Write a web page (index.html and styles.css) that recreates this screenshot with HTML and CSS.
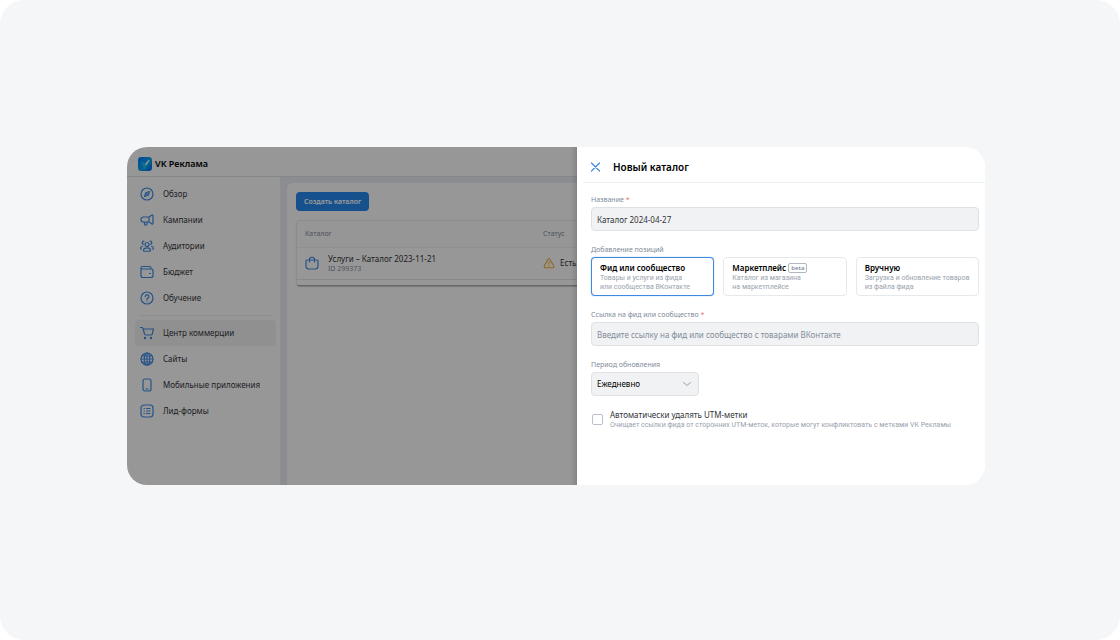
FILE: index.html
```html
<!DOCTYPE html>
<html lang="ru">
<head>
<meta charset="utf-8">
<meta name="viewport" content="width=device-width, initial-scale=1">
<title>VK Реклама – Новый каталог</title>
<link rel="stylesheet" href="styles.css">
</head>
<body>
<main class="stage">
  <div class="window">
    <div class="app">
      <header class="topbar">
        <svg class="logo" viewBox="0 0 26 26" aria-hidden="true">
          <defs>
            <linearGradient id="logo-fill" x1="0" y1="0" x2="1" y2="1">
              <stop offset="0" stop-color="#0077ff"/>
              <stop offset=".55" stop-color="#08a5f0"/>
              <stop offset="1" stop-color="#0062e8"/>
            </linearGradient>
          </defs>
          <rect width="26" height="26" rx="6" fill="url(#logo-fill)"/>
          <path d="M5 9c3 0 6 2 8 4l4-4 3 3-4 5c-1 3-3 5-5 6-1-5-3-9-6-14z" fill="#1fbdea"/>
          <path d="M13 14l5-7 4-2-2 4-5 6z" fill="#fff"/>
        </svg>
        <span class="brand">VK Реклама</span>
      </header>
      <div class="workspace">
        <nav class="sidebar">
          <a class="nav-item" href="#"><svg class="icon" viewBox="0 0 28 28"><circle cx="14" cy="14" r="12"/><path d="M19 9l-2.500 7.500L9 19l2.500-7.500z"/><circle cx="14" cy="14" r=".6"/></svg>Обзор</a>
          <a class="nav-item" href="#"><svg class="icon" viewBox="0 0 28 28"><path d="M18 8H7a4.500 4.500 0 0 0 0 10h11zM18 8l6-4c1-.5 2 0 2 1v16c0 1-1 1.500-2 1l-6-4M9 18v4c0 3 5 3 5 0v-4"/></svg>Кампании</a>
          <a class="nav-item" href="#"><svg class="icon" viewBox="0 0 28 28"><circle cx="14" cy="11" r="4"/><path d="M7 23c0-7 14-7 14 0 0 1-.5 1.500-1.500 1.500h-11C7.500 24.500 7 24 7 23zM8 4.500a3 3 0 1 0-1 6M5 14.500c-2.500.5-4 2-4 4.500 0 1 .5 1.500 2 1.500M20 4.500a3 3 0 1 1 1 6M23 14.500c2.500.5 4 2 4 4.500 0 1-.5 1.500-2 1.500"/></svg>Аудитории</a>
          <a class="nav-item" href="#"><svg class="icon" viewBox="0 0 28 28"><path d="M22 8V6c0-2-1-3-3-3H5C3 3 2 4 2 6v15c0 2 1 4 4 4h16c3 0 4-1 4-4v-9c0-3-1-4-4-4H5C3 8 2 7 2 5.500"/><path d="M19 17h2"/></svg>Бюджет</a>
          <a class="nav-item" href="#"><svg class="icon" viewBox="0 0 28 28"><circle cx="14" cy="14" r="12"/><path d="M10.500 11.500c0-5 7.500-4.500 7.500-.5 0 3-4 3-4 6M14 20v.5"/></svg>Обучение</a>
          <hr class="nav-divider">
          <a class="nav-item nav-item-active" href="#" aria-current="page"><svg class="icon" viewBox="0 0 28 28"><path d="M1 3h3c1 0 1.500 1 2 2l3 11c.3 1.500 1 2 2.500 2H22c1.500 0 2-.5 2.500-2L27 6H6.500"/><circle cx="10" cy="24" r="1.300"/><circle cx="22" cy="24" r="1.300"/></svg>Центр коммерции</a>
          <a class="nav-item" href="#"><svg class="icon" viewBox="0 0 28 28"><circle cx="14" cy="14" r="12"/><ellipse cx="14" cy="14" rx="5.500" ry="12"/><path d="M2 14h24M4 8h20M4 20h20M14 2v24"/></svg>Сайты</a>
          <a class="nav-item" href="#"><svg class="icon" viewBox="0 0 28 28"><rect x="6" y="2" width="16" height="24" rx="4"/><path d="M12 22h4"/></svg>Мобильные приложения</a>
          <a class="nav-item" href="#"><svg class="icon" viewBox="0 0 28 28"><rect x="2" y="2" width="24" height="24" rx="6"/><path d="M8 9h1M13 9h7M8 14h1M13 14h7M8 19h1M13 19h7"/></svg>Лид-формы</a>
        </nav>
        <section class="content">
          <button class="create" type="button">Создать каталог</button>
          <div class="table-box">
            <table class="catalogs">
              <thead><tr><th class="col-name">Каталог</th><th class="col-status">Статус</th></tr></thead>
              <tbody><tr>
                <td><div class="catalog">
                  <svg class="icon" viewBox="0 0 28 28"><path d="M4 8h20c1.500 0 2 1 2 2v10c0 4-2 6-6 6H8c-4 0-6-2-6-6V10c0-1 .5-2 2-2z"/><path d="M9 12V7c0-6 10-6 10 0v5"/></svg>
                  <div><div class="catalog-name">Услуги – Каталог 2023-11-21</div><div class="catalog-id">ID 299373</div></div>
                </div></td>
                <td><div class="status">
                  <svg class="icon icon-warning" viewBox="0 0 28 28"><path d="M12 5c1-2 3-2 4 0l9 16c1 2 0 4-2 4H5c-2 0-3-2-2-4zM14 11v6M14 20.500v.5"/></svg>
                  <span>Есть</span>
                </div></td>
              </tr></tbody>
            </table>
          </div>
        </section>
      </div>
      <div class="scrim"></div>
    </div>
    <aside class="panel">
      <header class="panel-head">
        <button class="close" type="button" aria-label="Закрыть"><svg viewBox="0 0 20 20"><path d="M2 2l16 16M18 2L2 18"/></svg></button>
        <h1 class="panel-title">Новый каталог</h1>
      </header>
      <form class="form">
        <div class="group">
          <label class="label" for="name">Название <span class="required">*</span></label>
          <input class="field" id="name" type="text" value="Каталог 2024-04-27">
        </div>
        <div class="group">
          <span class="label" id="source-label">Добавление позиций</span>
          <div class="options" role="group" aria-labelledby="source-label">
            <button class="option option-selected" type="button" aria-pressed="true"><span class="option-title">Фид или сообщество</span><span class="option-text">Товары и услуги из фида<br>или сообщества ВКонтакте</span></button>
            <button class="option" type="button" aria-pressed="false"><span class="option-title">Маркетплейс <span class="beta">beta</span></span><span class="option-text">Каталог из магазина<br>на маркетплейсе</span></button>
            <button class="option" type="button" aria-pressed="false"><span class="option-title">Вручную</span><span class="option-text">Загрузка и обновление товаров<br>из файла фида</span></button>
          </div>
        </div>
        <div class="group">
          <label class="label" for="link">Ссылка на фид или сообщество <span class="required">*</span></label>
          <input class="field" id="link" type="text" placeholder="Введите ссылку на фид или сообщество с товарами ВКонтакте">
        </div>
        <div class="group">
          <label class="label" for="period">Период обновления</label>
          <div class="select-wrap">
            <select class="field select" id="period"><option>Ежедневно</option></select>
            <svg class="chevron" viewBox="0 0 16 10"><path d="M1 2l7 6 7-6"/></svg>
          </div>
        </div>
        <div class="check-row">
          <input class="check" id="utm" type="checkbox">
          <label for="utm"><span class="check-title">Автоматически удалять UTM-метки</span><span class="check-text">Очищает ссылки фида от сторонних UTM-меток, которые могут конфликтовать с метками VK Рекламы</span></label>
        </div>
      </form>
    </aside>
  </div>
</main>
</body>
</html>
```
FILE: styles.css
```css
* { box-sizing: border-box; }
body {
  margin: 0;
  background: #fff;
  color: #323438;
  font: 8px/12px "Noto Sans", "Open Sans", sans-serif;
}
button, input, select { font: inherit; color: inherit; margin: 0; }
svg { display: block; flex: none; fill: none; stroke-linecap: round; stroke-linejoin: round; }
.stage {
  display: flex;
  min-height: 100vh;
  padding: 147px 135px 155px 127px;
  background: #f5f6f8;
  border-radius: 24px;
}
.window {
  flex: 1;
  display: grid;
  grid-template-columns: minmax(0, 450fr) minmax(0, 408fr);
  border-radius: 20px;
  overflow: hidden;
  background: #fff;
}

.app { position: relative; display: flex; flex-direction: column; overflow: hidden; background: #fcfcfc; }
.scrim {
  position: absolute;
  inset: 0;
  background: linear-gradient(to left, rgba(0, 0, 0, .12), transparent 6px), rgba(0, 0, 0, .4);
}
.topbar {
  display: flex;
  align-items: center;
  gap: 3px;
  height: 30px;
  padding: 4px 0 0 11px;
  border-bottom: 1px solid #dce1e6;
}
.logo { width: 14px; height: 14px; stroke: none; }
.brand { font-size: 9px; font-weight: 600; color: #000; }
.workspace { flex: 1; display: flex; background: #e9ecf1; }
.sidebar { flex: 0 0 153px; padding: 4px 4px 8px 8px; background: #fcfcfc; }
.nav-item {
  display: flex;
  align-items: center;
  gap: 9px;
  height: 26px;
  padding-left: 5px;
  border-radius: 4px;
  text-decoration: none;
  color: inherit;
  white-space: nowrap;
}
.nav-item-active { background: #f0f1f2; }
.nav-divider { height: 1px; margin: 4px; border: 0; background: #eeeff1; }
.icon { width: 14px; height: 14px; stroke: #3f8ae0; stroke-width: 2.4; }
.icon-warning { width: 12px; height: 12px; stroke: #f5a623; }

.content {
  flex: 1;
  min-width: 0;
  margin: 6px 0 0 7px;
  padding: 9px 0 0 9px;
  overflow: hidden;
  border-top-left-radius: 6px;
  background: #fcfcfc;
}
.create {
  display: block;
  height: 19px;
  padding: 0 8px;
  border: 0;
  border-radius: 4px;
  background: #2688eb;
  color: #fff;
  font-size: 7px;
  font-weight: 600;
}
.table-box {
  margin-top: 9px;
  padding-bottom: 5px;
  border: 1px solid #e7e8ea;
  border-right: 0;
  border-bottom: 1px solid #aaa;
  border-radius: 4px 0 0 4px;
  box-shadow: 0 1px 1px #ccc;
}
.catalogs { width: 100%; border-collapse: collapse; table-layout: fixed; }
.catalogs th {
  height: 26px;
  padding: 0 0 0 8px;
  background: #fafafa;
  color: #818c99;
  font-size: 7px;
  font-weight: 400;
  text-align: left;
}
.col-name { width: 238px; }
.catalogs td { height: 32px; padding: 0 0 0 8px; border-top: 1px solid #eeeff1; border-bottom: 1px solid #e1e3e6; white-space: nowrap; }
.catalog { display: flex; align-items: center; gap: 9px; }
.catalog-name { line-height: 10px; }
.catalog-id { font-size: 7px; line-height: 9px; color: #818c99; }
.status { display: flex; align-items: center; gap: 5px; }

.panel { background: #fff; }
.panel-head {
  display: flex;
  align-items: center;
  gap: 12px;
  height: 36px;
  margin-left: 6px;
  padding: 5px 0 0 7px;
  border-bottom: 1px solid #eeeff1;
}
.close { padding: 0; border: 0; background: none; }
.close svg { width: 11px; height: 10px; stroke: #3f8ae0; stroke-width: 2.4; }
.panel-title { margin: 0; font-size: 10px; line-height: 14px; font-weight: 600; color: #000; }
.form { display: flex; flex-direction: column; gap: 13px; padding: 11px 6px 14px 14px; }
.group { display: flex; flex-direction: column; gap: 1px; }
.label { font-size: 7px; color: #818c99; }
.required { color: #e67676; }
.field {
  width: 100%;
  height: 24px;
  padding: 0 5px;
  border: 1px solid #dfe1e4;
  border-radius: 4px;
  background: #f1f2f4;
}
.field::placeholder { color: #818c99; opacity: 1; }
.select-wrap { position: relative; width: 108px; }
.select { display: block; appearance: none; color: #000; }
.chevron { position: absolute; right: 8px; top: 9px; width: 8px; height: 6px; stroke: #99a2ad; stroke-width: 2; }
.options { display: grid; grid-template-columns: repeat(3, 1fr); gap: 9px; }
.option {
  display: flex;
  flex-direction: column;
  justify-content: center;
  height: 39px;
  padding: 0 8px;
  border: 1px solid #e7e8ea;
  border-radius: 4px;
  background: #fff;
  text-align: left;
  white-space: nowrap;
}
.option-selected { border-color: #3f8ae0; box-shadow: 0 0 1px #3f8ae0; }
.option-title { display: flex; align-items: center; gap: 2px; font-weight: 600; color: #000; }
.option-text { font-family: Roboto, "Noto Sans", sans-serif; font-size: 7px; line-height: 9px; color: #99a2ad; }
.beta {
  padding: 0 2px;
  border: 1px solid #aeb7c2;
  border-radius: 2px;
  color: #818c99;
  font-size: 6px;
  line-height: 8px;
}
.check-row { display: flex; align-items: center; gap: 7px; padding-left: 1px; }
.check {
  appearance: none;
  flex: none;
  width: 11px;
  height: 11px;
  border: 1px solid #b8c1cc;
  border-radius: 2px;
  background: #fff;
}
.check-title, .check-text { display: block; }
.check-title { line-height: 11px; }
.check-text { font-family: Roboto, "Noto Sans", sans-serif; font-size: 7px; line-height: 10px; color: #99a2ad; white-space: nowrap; }
```
